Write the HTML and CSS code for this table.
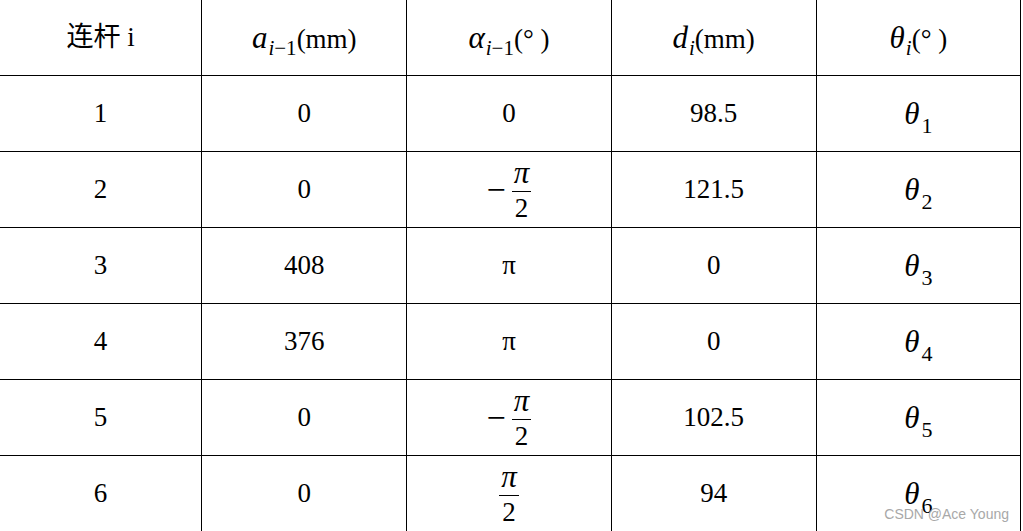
FILE: index.html
```html
<!DOCTYPE html>
<html>
<head>
  <meta charset="utf-8">
  <title>DH 参数表</title>
  <link rel="stylesheet" href="styles.css">
</head>
<body>
  <div class="page">
    <table class="dh-table">
      <tr class="head">
        <td>连杆 i</td>
        <td><span class="var">a</span><sub>i<span class="up">−1</span></sub>(mm)</td>
        <td><span class="var">α</span><sub>i<span class="up">−1</span></sub>(° )</td>
        <td><span class="var">d</span><sub>i</sub>(mm)</td>
        <td><span class="var">θ</span><sub>i</sub>(° )</td>
      </tr>
      <tr>
        <td>1</td>
        <td>0</td>
        <td>0</td>
        <td>98.5</td>
        <td><span class="var">θ</span><sub class="num">1</sub></td>
      </tr>
      <tr>
        <td>2</td>
        <td>0</td>
        <td><span class="minus">−</span><span class="frac"><span class="var">π</span><span class="den">2</span></span></td>
        <td>121.5</td>
        <td><span class="var">θ</span><sub class="num">2</sub></td>
      </tr>
      <tr>
        <td>3</td>
        <td>408</td>
        <td>π</td>
        <td>0</td>
        <td><span class="var">θ</span><sub class="num">3</sub></td>
      </tr>
      <tr>
        <td>4</td>
        <td>376</td>
        <td>π</td>
        <td>0</td>
        <td><span class="var">θ</span><sub class="num">4</sub></td>
      </tr>
      <tr>
        <td>5</td>
        <td>0</td>
        <td><span class="minus">−</span><span class="frac"><span class="var">π</span><span class="den">2</span></span></td>
        <td>102.5</td>
        <td><span class="var">θ</span><sub class="num">5</sub></td>
      </tr>
      <tr>
        <td>6</td>
        <td>0</td>
        <td><span class="frac"><span class="var">π</span><span class="den">2</span></span></td>
        <td>94</td>
        <td><span class="var">θ</span><sub class="num">6</sub></td>
      </tr>
    </table>
    <div class="watermark">CSDN @Ace Young</div>
  </div>
</body>
</html>
```

FILE: styles.css
```css
body {
  margin: 0;
  padding: 0;
  background: #ffffff;
  color: #000000;
  font-family: "Liberation Serif", "Noto Sans CJK SC", serif;
  overflow: hidden;
}

.page {
  position: relative;
  width: 1023px;
  height: 531px;
  overflow: hidden;
}

.dh-table {
  border-collapse: collapse;
  table-layout: fixed;
  width: 1021px;
  font-size: 27px;
}

.dh-table td {
  height: 75px;
  padding: 0;
  text-align: center;
  vertical-align: middle;
  border-right: 1px solid #000;
  border-bottom: 1px solid #000;
  line-height: 1;
}

.dh-table td:nth-child(1) { width: 201px; }
.dh-table td:nth-child(2) { width: 204px; }
.dh-table td:nth-child(3) { width: 203px; }
.dh-table td:nth-child(4) { width: 204px; }
.dh-table td:nth-child(5) { width: 203px; }

.dh-table .head td {
  height: 75px;
}

.var {
  font-family: "Liberation Serif", serif;
  font-style: italic;
  font-size: 31px;
}

sub {
  font-family: "Liberation Serif", serif;
  font-style: italic;
  font-size: 21px;
  vertical-align: -7px;
  line-height: 0;
  margin-left: 1px;
}

sub .up {
  font-style: normal;
}

sub.num {
  font-style: normal;
  font-size: 22px;
  vertical-align: -9px;
  margin-left: 2px;
}

.minus {
  font-size: 34px;
  margin-right: 6px;
  vertical-align: middle;
}

.frac {
  display: inline-flex;
  flex-direction: column;
  align-items: center;
  vertical-align: middle;
  font-size: 27px;
}

.frac .var {
  padding: 0 2px 3px;
  border-bottom: 1px solid #000;
  line-height: 1;
}

.frac .den {
  padding-top: 3px;
  line-height: 1;
}

.watermark {
  position: absolute;
  right: 14px;
  bottom: 9px;
  font-family: "Liberation Sans", Arial, sans-serif;
  font-size: 14px;
  color: #a8a8a8;
}
```
